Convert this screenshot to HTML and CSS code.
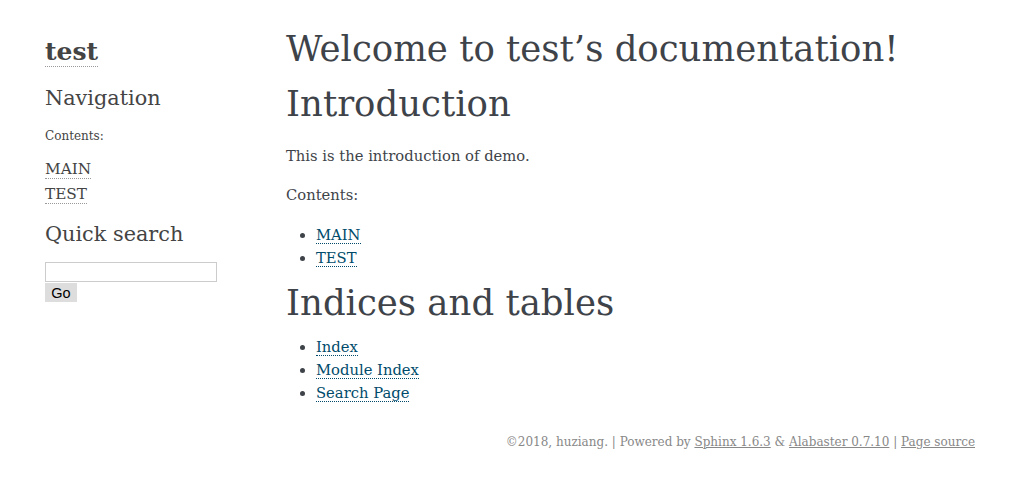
FILE: index.html
```html
<!DOCTYPE html>
<html lang="en">
<head>
<meta charset="utf-8">
<title>Welcome to test’s documentation! — test documentation</title>
<link rel="stylesheet" href="styles.css">
</head>
<body>
<div class="document">
  <div class="sidebar">
    <h1 class="logo"><a href="#">test</a></h1>
    <h3 class="side-h">Navigation</h3>
    <p class="caption">Contents:</p>
    <ul class="side-toc">
      <li><a href="#">MAIN</a></li>
      <li><a href="#">TEST</a></li>
    </ul>
    <h3 class="side-h search-h">Quick search</h3>
    <form class="search">
      <input class="search-input" type="text" aria-label="search">
      <button class="search-go" type="button">Go</button>
    </form>
  </div>
  <div class="body">
    <h1 class="title">Welcome to test’s documentation!</h1>
    <h1 class="title">Introduction</h1>
    <p class="para">This is the introduction of demo.</p>
    <p class="para">Contents:</p>
    <ul class="toc">
      <li><a href="#">MAIN</a></li>
      <li><a href="#">TEST</a></li>
    </ul>
    <h1 class="title indices">Indices and tables</h1>
    <ul class="toc toc-indices">
      <li><a href="#">Index</a></li>
      <li><a href="#">Module Index</a></li>
      <li><a href="#">Search Page</a></li>
    </ul>
  </div>
</div>
<div class="footer">
  ©2018, huziang. | Powered by <a href="#">Sphinx 1.6.3</a> &amp; <a href="#">Alabaster 0.7.10</a> | <a href="#">Page source</a>
</div>
</body>
</html>
```
FILE: styles.css
```css
body {
  margin: 0;
  background: #fff;
  color: #3E4349;
  font-family: "DejaVu Serif", Georgia, serif;
  font-size: 14.75px;
}

.document {
  display: flex;
  width: 930px;
  margin: 0 0 0 45px;
  padding-top: 21px;
}

.sidebar {
  width: 241px;
  flex: none;
  color: #444;
}

.logo {
  margin: 14px 0 0;
  font-size: 25px;
  line-height: 34px;
  font-weight: bold;
}

.logo a {
  color: #444;
  text-decoration: none;
  border-bottom: 1px dotted #999;
}

.side-h {
  margin: 14px 0 0;
  font-size: 20.8px;
  font-weight: normal;
  line-height: 30px;
  color: #444;
}

.caption {
  margin: 14px 0 0;
  font-size: 12px;
  line-height: 18px;
}

.side-toc {
  list-style: none;
  margin: 12px 0 0;
  padding: 0;
  font-size: 15.3px;
  line-height: 25px;
}

.side-toc a {
  color: #444;
  text-decoration: none;
  border-bottom: 1px dotted #999;
}

.search-h {
  margin-top: 12px;
}

.search {
  margin: 13px 0 0;
  display: flex;
  flex-direction: column;
  align-items: flex-start;
}

.search-input {
  box-sizing: border-box;
  width: 172px;
  height: 20px;
  margin: 0;
  border: 1px solid #ccc;
  padding: 0 2px;
  font-size: 13px;
}

.search-go {
  box-sizing: border-box;
  width: 32px;
  height: 19px;
  margin: 1px 0 0;
  border: 0;
  padding: 0;
  background: #ddd;
  color: #000;
  font-family: "Liberation Sans", Arial, sans-serif;
  font-size: 14.5px;
}

.body {
  flex: 1;
  min-width: 0;
}

.title {
  margin: 0;
  font-size: 35.5px;
  font-weight: normal;
  line-height: 55px;
  color: #3E4349;
}

.para {
  margin: 13px 0 0;
  line-height: 24px;
}

.para + .para {
  margin-top: 15px;
}

.toc {
  margin: 16px 0 0;
  padding-left: 30px;
  line-height: 23px;
}

.toc a {
  color: #004B6B;
  text-decoration: none;
  border-bottom: 1px dotted #004B6B;
}

.indices {
  margin-top: 6px;
}

.toc-indices {
  margin-top: 5px;
}

.footer {
  width: 930px;
  margin: 28px 0 0 45px;
  text-align: right;
  font-size: 12px;
  line-height: 20px;
  color: #888;
}

.footer a {
  color: #888;
  text-decoration: underline;
}
```
